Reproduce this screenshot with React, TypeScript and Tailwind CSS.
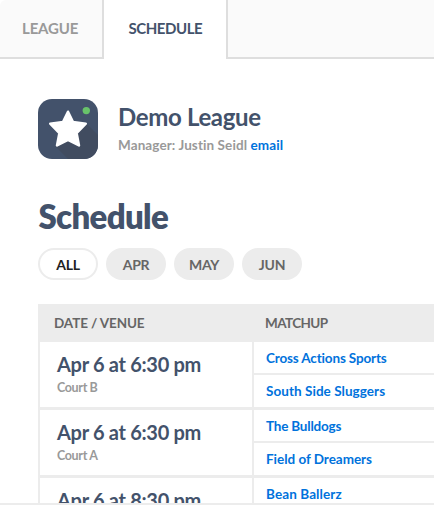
interface Team {
  name: string;
  tracking: string;
}

interface Game {
  time: string;
  court?: string;
  teams: Team[];
}

const games: Game[] = [
  {
    time: 'Apr 6 at 6:30 pm',
    court: 'Court B',
    teams: [
      { name: 'Cross Actions Sports', tracking: 'tracking-[-0.15px]' },
      { name: 'South Side Sluggers', tracking: 'tracking-[0.05px]' },
    ],
  },
  {
    time: 'Apr 6 at 6:30 pm',
    court: 'Court A',
    teams: [
      { name: 'The Bulldogs', tracking: 'tracking-[-0.2px]' },
      { name: 'Field of Dreamers', tracking: 'tracking-[-0.03px]' },
    ],
  },
  {
    time: 'Apr 6 at 8:30 pm',
    teams: [{ name: 'Bean Ballerz', tracking: 'tracking-[0.1px]' }],
  },
];

function Logo() {
  return (
    <svg width="60" height="60" viewBox="0 0 60 60" className="mt-px shrink-0">
      <defs>
        <clipPath id="tile">
          <rect width="60" height="60" rx="14" />
        </clipPath>
      </defs>
      <g clipPath="url(#tile)">
        <rect width="60" height="60" fill="#43526b" />
        <path d="M49 25 L62 38 V62 H32 L17 47 Z" fill="#414c60" />
      </g>
      <path
        d="M30 12.7 L34.9 22.9 L47.8 24.7 L38.6 34 L41 46.5 L30 40.8 L19 46.5 L21.4 34 L12.2 24.7 L25.1 22.9 Z"
        fill="#fff"
        stroke="#fff"
        strokeWidth="2.5"
        strokeLinejoin="round"
      />
      <circle cx="48.3" cy="11.6" r="3.7" fill="#68c36a" />
    </svg>
  );
}

export default function App() {
  return (
    <div className="flex h-[505px] w-[434px] flex-col overflow-hidden border-b-2 border-[#ececec] bg-white font-['Lato','Open_Sans',sans-serif] text-[#43526b] [font-variant-ligatures:none]">
      <nav className="flex h-[59px] shrink-0 text-[15px] font-bold">
        <div className="flex w-[104px] items-center rounded-tl-md border-r-2 border-b-2 border-[#dedede] bg-[#fafafa] pl-[22px] tracking-[-0.15px] text-[#999]">
          LEAGUE
        </div>
        <div className="flex w-[122px] items-center pb-[2px] pl-[24.5px] tracking-[-0.45px]">SCHEDULE</div>
        <div className="flex-1 border-b-2 border-l-2 border-[#dedede] bg-[#fafafa]" />
      </nav>
      <header className="mt-[39px] ml-[38px] flex h-[61px] shrink-0">
        <Logo />
        <div className="ml-[20px] whitespace-nowrap">
          <h1 className="mt-[4px] text-[24px] leading-[30px] font-bold tracking-[-0.35px]">Demo League</h1>
          <p className="mt-[3px] text-[13.5px] leading-[20px] font-bold tracking-[0.1px] text-[#999]">
            Manager: Justin Seidl <a className="text-[#0072dc]">email</a>
          </p>
        </div>
      </header>
      <h2 className="mt-[37px] ml-[38.5px] h-[40px] shrink-0 text-[33px] leading-[40px] font-extrabold tracking-[-0.7px]">
        Schedule
      </h2>
      <div className="mt-[12px] ml-[38px] flex h-[32px] shrink-0 gap-2 text-[14px] font-bold tracking-[-0.3px] text-[#666]">
        <button className="w-[60px] rounded-full border-2 border-[#ececec] text-[#222]">ALL</button>
        <button className="w-[60px] rounded-full bg-[#ececec]">APR</button>
        <button className="w-[60px] rounded-full bg-[#ececec]">MAY</button>
        <button className="w-[60px] rounded-full bg-[#ececec]">JUN</button>
      </div>
      <section className="mt-[24px] ml-[38px] shrink-0">
        <div className="flex h-[38px] items-center bg-[#ececec] text-[13.5px] font-bold text-[#666]">
          <span className="w-[211px] pl-[16px] tracking-[-0.12px]">DATE / VENUE</span>
          <span className="pl-[16px] tracking-[-0.6px]">MATCHUP</span>
        </div>
        {games.map((game, i) => (
          <div key={i} className="flex h-[68px] border-b-3 border-l-2 border-[#ececec]">
            <div className="w-[212px] pl-[17px]">
              <div className="mt-[9px] text-[20px] leading-[26px] font-bold tracking-[-0.3px]">{game.time}</div>
              {game.court && (
                <div className="mt-[2px] text-[12.5px] leading-[18px] font-bold tracking-[-0.35px] text-[#999]">{game.court}</div>
              )}
            </div>
            <div className="flex flex-1 flex-col border-l-2 border-[#ececec] text-[13.5px] font-bold text-[#0072dc]">
              {game.teams.map((team, j) => (
                <div
                  key={team.name}
                  className={`flex items-center pl-[12px] ${j === 0 ? 'h-[33px] border-b-2 border-[#ececec] pt-px' : 'h-[32px]'}`}
                >
                  <span className={team.tracking}>{team.name}</span>
                </div>
              ))}
            </div>
          </div>
        ))}
      </section>
    </div>
  );
}
